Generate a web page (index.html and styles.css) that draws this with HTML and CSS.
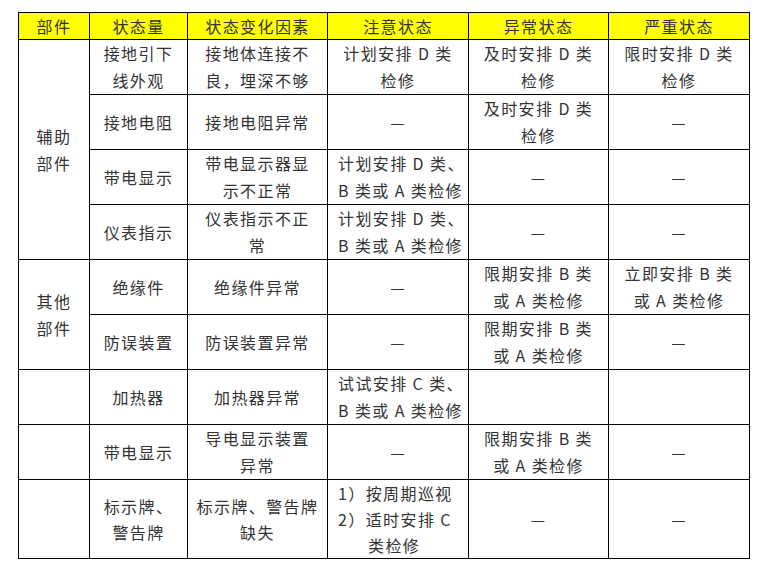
FILE: index.html
```html
<!DOCTYPE html>
<html lang="zh-CN">
<head>
<meta charset="utf-8">
<title>状态评价表</title>
<link rel="stylesheet" href="styles.css">
</head>
<body>
<table class="grid">
  <colgroup>
    <col class="c1"><col class="c2"><col class="c3"><col class="c4"><col class="c5"><col class="c6">
  </colgroup>
  <thead>
    <tr class="head">
      <th>部件</th><th>状态量</th><th>状态变化因素</th><th>注意状态</th><th>异常状态</th><th>严重状态</th>
    </tr>
  </thead>
  <tbody>
    <tr class="r2">
      <td rowspan="4">辅助<br>部件</td>
      <td>接地引下<br>线外观</td>
      <td>接地体连接不<br>良，埋深不够</td>
      <td>计划安排 D 类<br>检修</td>
      <td>及时安排 D 类<br>检修</td>
      <td>限时安排 D 类<br>检修</td>
    </tr>
    <tr class="r2">
      <td>接地电阻</td>
      <td>接地电阻异常</td>
      <td>—</td>
      <td>及时安排 D 类<br>检修</td>
      <td>—</td>
    </tr>
    <tr class="r2">
      <td>带电显示</td>
      <td>带电显示器显<br>示不正常</td>
      <td class="left">计划安排 D 类、<br>B 类或 A 类检修</td>
      <td>—</td>
      <td>—</td>
    </tr>
    <tr class="r2">
      <td>仪表指示</td>
      <td>仪表指示不正<br>常</td>
      <td class="left">计划安排 D 类、<br>B 类或 A 类检修</td>
      <td>—</td>
      <td>—</td>
    </tr>
    <tr class="r2">
      <td rowspan="2">其他<br>部件</td>
      <td>绝缘件</td>
      <td>绝缘件异常</td>
      <td>—</td>
      <td>限期安排 B 类<br>或 A 类检修</td>
      <td>立即安排 B 类<br>或 A 类检修</td>
    </tr>
    <tr class="r2">
      <td>防误装置</td>
      <td>防误装置异常</td>
      <td>—</td>
      <td>限期安排 B 类<br>或 A 类检修</td>
      <td>—</td>
    </tr>
    <tr class="r2">
      <td></td>
      <td>加热器</td>
      <td>加热器异常</td>
      <td class="left">试试安排 C 类、<br>B 类或 A 类检修</td>
      <td></td>
      <td></td>
    </tr>
    <tr class="r2">
      <td></td>
      <td>带电显示</td>
      <td>导电显示装置<br>异常</td>
      <td>—</td>
      <td>限期安排 B 类<br>或 A 类检修</td>
      <td>—</td>
    </tr>
    <tr class="r3">
      <td></td>
      <td>标示牌、<br>警告牌</td>
      <td>标示牌、警告牌<br>缺失</td>
      <td class="left list">1）按周期巡视<br>2）适时安排 C<br><span class="hang">类检修</span></td>
      <td>—</td>
      <td>—</td>
    </tr>
  </tbody>
</table>
</body>
</html>
```

FILE: styles.css
```css
html, body {
  margin: 0;
  padding: 0;
  background: #ffffff;
}

body {
  padding: 12px 0 0 18px;
  font-family: "Noto Sans CJK SC", "Noto Sans", sans-serif;
  color: #333333;
}

.grid {
  border-collapse: collapse;
  table-layout: fixed;
  width: 732px;
  font-size: 16px;
  line-height: 27px;
  letter-spacing: 1.4px;
}

.c1 { width: 71px; }
.c2 { width: 98px; }
.c3 { width: 140px; }
.c4 { width: 141px; }
.c5 { width: 140px; }
.c6 { width: 141px; }

.grid th,
.grid td {
  border: 1px solid #000000;
  padding: 0;
  text-align: center;
  vertical-align: middle;
  white-space: nowrap;
  font-weight: normal;
}

.head th {
  background: #ffff00;
  height: 26px;
  line-height: 25px;
}

.r2 td { height: 54px; }
.r3 td {
  height: 78px;
  line-height: 26px;
}

.grid td.left {
  text-align: left;
  padding-left: 10px;
}

.grid td.list {
  padding-left: 10px;
}

.hang {
  padding-left: 30px;
}
```
